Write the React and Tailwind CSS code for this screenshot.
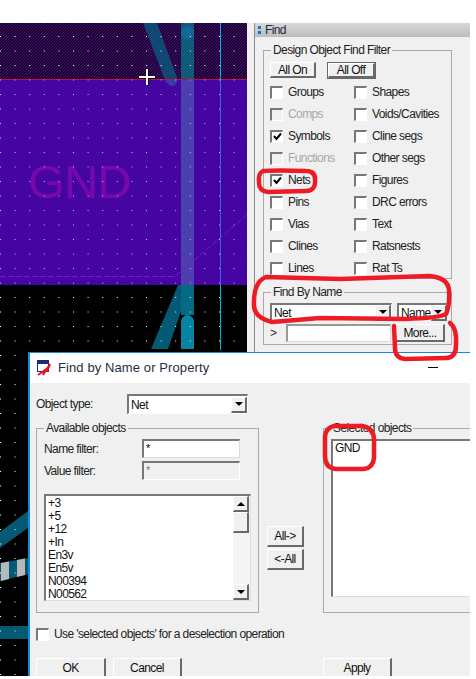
const FONT = "font-['Liberation_Sans',Arial,sans-serif]"

const LEFT_FILTERS = [
  { label: 'Groups' },
  { label: 'Comps', disabled: true },
  { label: 'Symbols', checked: true },
  { label: 'Functions', disabled: true },
  { label: 'Nets', checked: true },
  { label: 'Pins' },
  { label: 'Vias' },
  { label: 'Clines' },
  { label: 'Lines' },
]
const RIGHT_FILTERS = ['Shapes', 'Voids/Cavities', 'Cline segs', 'Other segs', 'Figures', 'DRC errors', 'Text', 'Ratsnests', 'Rat Ts']
const NETS = ['+3', '+5', '+12', '+In', 'En3v', 'En5v', 'N00394', 'N00562']

function Checkbox({ label, checked, disabled }) {
  return (
    <div className="flex items-center h-[22px] gap-[5px]">
      <div className={`w-[13px] h-[13px] shrink-0 border-t-2 border-l-2 border-r border-b border-t-[#777] border-l-[#777] border-r-white border-b-white flex items-center justify-center ${disabled ? 'bg-[#f0f0f0]' : 'bg-white'}`}>
        {checked && (
          <svg width="9" height="9" viewBox="0 0 9 9">
            <path d="M1 4 L3.5 7 L8 1.5" fill="none" stroke="#000" strokeWidth="2" />
          </svg>
        )}
      </div>
      <span className={`whitespace-nowrap ${disabled ? 'text-[#a8a8a8]' : 'text-[#222]'}`}>{label}</span>
    </div>
  )
}

function Button({ children, className = '' }) {
  return (
    <div className={`flex items-center justify-center bg-[#f0f0f0] border-t border-l border-t-white border-l-white border-b-2 border-r-2 border-b-[#696969] border-r-[#696969] text-[#111] ${className}`}>
      {children}
    </div>
  )
}

function Arrow({ up }) {
  return (
    <div className="w-[16px] h-[16px] flex items-center justify-center bg-[#f0f0f0] border-t border-l border-t-white border-l-white border-b-2 border-r-2 border-b-[#696969] border-r-[#696969] shrink-0">
      <div className={`w-0 h-0 border-l-[4px] border-r-[4px] border-l-transparent border-r-transparent ${up ? 'border-b-[4px] border-b-black' : 'border-t-[4px] border-t-black'}`} />
    </div>
  )
}

function Select({ value, className = '' }) {
  return (
    <div className={`flex items-center bg-white border-t-2 border-l-2 border-t-[#777] border-l-[#777] border-r border-b border-r-white border-b-white ${className}`}>
      <span className="flex-1 pl-[2px] whitespace-nowrap text-[#111]">{value}</span>
      <Arrow />
    </div>
  )
}

function Group({ title, className = '', children }) {
  return (
    <div className={`relative border border-[#a9a9a9] ${className}`}>
      <span className="absolute -top-[8px] left-[7px] px-[2px] leading-[14px] bg-[#f0f0f0] text-[#222] whitespace-nowrap">{title}</span>
      {children}
    </div>
  )
}

function Canvas() {
  return (
    <svg width="247" height="653" viewBox="0 23 247 653" className="block">
      <defs>
        <pattern id="hatch" width="3" height="3" patternUnits="userSpaceOnUse">
          <rect width="3" height="3" fill="#000" />
          <path d="M0 3 L3 0 M-1 1 L1 -1 M2 4 L4 2" stroke="#4f0a86" strokeWidth="1.1" />
        </pattern>
        <pattern id="hatchOver" width="3" height="3" patternUnits="userSpaceOnUse">
          <path d="M0 3 L3 0 M-1 1 L1 -1 M2 4 L4 2" stroke="#3a0a70" strokeWidth="1.1" opacity="0.45" />
        </pattern>
        <pattern id="fill" width="3" height="3" patternUnits="userSpaceOnUse">
          <rect width="3" height="3" fill="#3000b0" />
          <path d="M0 3 L3 0 M-1 1 L1 -1 M2 4 L4 2" stroke="#5a0896" strokeWidth="1.1" />
        </pattern>
        <pattern id="dots" width="14.6" height="14.5" patternUnits="userSpaceOnUse" patternTransform="translate(0 7)">
          <rect x="0" y="0" width="1" height="1" fill="#fff" />
        </pattern>
        <pattern id="dots2" width="14.6" height="14.5" patternUnits="userSpaceOnUse" patternTransform="translate(0 7)">
          <rect x="0" y="0" width="1" height="1" fill="#d8b8f0" />
        </pattern>
      </defs>
      <rect x="0" y="23" width="247" height="653" fill="#000" />
      <rect x="0" y="23" width="247" height="56" fill="url(#hatch)" />

      {/* traces above the shape */}
      <path d="M143 23 L157 23 L178 80 L165 80 Z" fill="#045a74" />
      <rect x="181" y="23" width="13" height="56" fill="#04707e" />
      <circle cx="187.5" cy="33" r="6.5" fill="#0684a4" />
      <rect x="143" y="23" width="52" height="56" fill="url(#hatchOver)" />
      <rect x="0" y="23" width="247" height="56" fill="url(#dots)" />

      <rect x="0" y="79" width="247" height="206" fill="url(#fill)" />
      <path d="M164 79 H178 L176 84 Q172 88 168 84 Z" fill="#3d3aa6" />
      <rect x="181" y="79" width="13" height="206" fill="#4d3fb0" />
      <rect x="0" y="79" width="247" height="1" fill="#c0103c" />
      <text x="28" y="198" fontSize="47" fill="#7808ac" fontFamily="'Liberation Sans', Arial, sans-serif">GND</text>
      <rect x="0" y="79" width="247" height="206" fill="url(#dots2)" />
      <path d="M0 276.5 H175 L247 215" fill="none" stroke="#8a0fd0" strokeWidth="1" strokeDasharray="6 2" />
      <rect x="220" y="80" width="1" height="205" fill="#3a60f0" />

      {/* below the shape */}
      <path d="M178 285 L190 285 L168 349 L151 349 Z" fill="#045a74" />
      <rect x="181" y="285" width="13" height="30" fill="#036c84" />
      <path d="M181 349 V321.5 A6.5 6.5 0 0 1 194 321.5 V349 Z" fill="#0684a4" />
      <rect x="220" y="23" width="1" height="57" fill="#00b4e6" />
      <rect x="220" y="285" width="1" height="65" fill="#00b4e6" />

      {/* crosshair */}
      <path d="M140 78 H156 M148 70 V86" stroke="#000" strokeWidth="2" />
      <path d="M139 77 H155 M147 69 V85" stroke="#fff" strokeWidth="2" />

      {/* traces beside the dialog */}
      <path d="M0 532 L28 511 V528 L0 548 Z" fill="#045a74" />
      <path d="M0 563 L28 558 V574 L0 581 Z" fill="#045a74" />
      <path d="M1 563 L9 561.5 V579 L1 581 Z M17 560 L25 558.5 V575 L17 577 Z" fill="#b8b8b8" />
      <rect x="0" y="626" width="28" height="13" fill="#045a74" />
      <rect x="0" y="285" width="247" height="391" fill="url(#dots)" />
    </svg>
  )
}

function FindPanel() {
  return (
    <div className="w-[223px] h-[329px] flex bg-[#f0f0f0] overflow-hidden">
      <div className="w-[8px] shrink-0 border-r border-r-[#8a8a8a]" />
      <div className="flex-1 flex flex-col">
        <div className="h-[14px] flex items-center gap-[4px] pl-[3px] bg-gradient-to-b from-[#d8d8d8] to-[#bdbdbd] text-[#1c2a40] shrink-0">
          <div className="flex flex-col gap-[2px]">
            <div className="w-[3px] h-[3px] bg-[#0a78e0]" />
            <div className="w-[3px] h-[3px] bg-[#0a78e0]" />
          </div>
          <span>Find</span>
        </div>
        <div className="pl-[8px] pt-[13px]">
          <Group title="Design Object Find Filter" className="w-[189px] h-[229px] pl-[6px] pt-[11px]">
            <div className="flex gap-[11px]">
              <Button className="w-[46px] h-[16px]">All On</Button>
              <div className="border border-[#696969]"><Button className="w-[47px] h-[15px]">All Off</Button></div>
            </div>
            <div className="flex mt-[2px]">
              <div className="w-[84px] flex flex-col">
                {LEFT_FILTERS.map(f => <Checkbox key={f.label} {...f} />)}
              </div>
              <div className="flex flex-col">
                {RIGHT_FILTERS.map(label => <Checkbox key={label} label={label} />)}
              </div>
            </div>
          </Group>
          <Group title="Find By Name" className="w-[189px] h-[53px] mt-[13px] pl-[6px] pt-[10px]">
            <div className="flex gap-[5px]">
              <Select value="Net" className="w-[122px] h-[18px]" />
              <Select value="Name" className="w-[50px] h-[18px]" />
            </div>
            <div className="flex items-center mt-[3px]">
              <span className="w-[16px] text-[#333]">&gt;</span>
              <div className="w-[105px] h-[18px] bg-white border-t-2 border-l-2 border-t-[#999] border-l-[#999] border-r border-b border-r-[#ddd] border-b-[#ddd]" />
              <Button className="w-[49px] h-[18px] ml-[5px]">More...</Button>
            </div>
          </Group>
        </div>
      </div>
    </div>
  )
}

function Dialog() {
  return (
    <div className="absolute left-[28px] top-[352px] w-[442px] h-[324px] flex flex-col overflow-hidden bg-[#f0f0f0] border-l-2 border-t border-[#1a86d8]">
      <div className="h-[30px] shrink-0 bg-white flex items-center pl-[7px] gap-[5px]">
        <svg width="16" height="16" viewBox="0 0 16 16">
          <rect x="0.5" y="0.5" width="11" height="11" fill="#fff" stroke="#1c2a78" />
          <rect x="1" y="1" width="10" height="3" fill="#1c2a78" />
          <path d="M1 15 L8 10 L6 15 L13 4 L10 12" fill="none" stroke="#e8102a" strokeWidth="2" />
        </svg>
        <span className="text-[13px] text-[#1e2e44] tracking-[0.1px]">Find by Name or Property</span>
        <div className="absolute right-[32px] top-[14px] w-[10px] h-px bg-black" />
      </div>
      <div className="flex-1 pl-[6px] pt-[11px]">
        <div className="flex items-center h-[20px]">
          <span className="w-[91px] text-[#222]">Object type:</span>
          <Select value="Net" className="w-[121px] h-[20px]" />
        </div>
        <div className="flex mt-[14px]">
          <Group title="Available objects" className="w-[223px] h-[185px] shrink-0 pt-[10px] pl-[7px]">
            <div className="flex items-center h-[19px]">
              <span className="w-[98px] text-[#222]">Name filter:</span>
              <div className="w-[98px] h-[19px] bg-white border-t-2 border-l-2 border-t-[#777] border-l-[#777] border-r border-b border-r-[#ddd] border-b-[#ddd] text-[11px] leading-[14px] pl-[2px]">*</div>
            </div>
            <div className="flex items-center h-[19px] mt-[3px]">
              <span className="w-[98px] text-[#222]">Value filter:</span>
              <div className="w-[98px] h-[19px] bg-[#f0f0f0] border-t-2 border-l-2 border-t-[#777] border-l-[#777] border-r border-b border-r-white border-b-white text-[11px] leading-[14px] pl-[2px] text-[#777]">*</div>
            </div>
            <div className="flex w-[207px] h-[107px] mt-[14px] bg-white border-t-2 border-l-2 border-t-[#777] border-l-[#777] border-r border-b border-r-[#ddd] border-b-[#ddd]">
              <div className="flex-1 pl-[2px] text-[#111] leading-[13px] pt-[1px]">
                {NETS.map(n => <div key={n}>{n}</div>)}
              </div>
              <div className="w-[17px] flex flex-col bg-[#f4f4f4]">
                <Arrow up />
                <div className="w-[16px] h-[21px] bg-[#f0f0f0] border-t border-l border-t-white border-l-white border-b-2 border-r-2 border-b-[#696969] border-r-[#696969]" />
                <div className="flex-1" />
                <Arrow />
              </div>
            </div>
          </Group>
          <div className="w-[64px] shrink-0 flex flex-col pt-[98px] pl-[8px]">
            <Button className="w-[37px] h-[21px] border-t-[#ddd]">All-&gt;</Button>
            <Button className="w-[37px] h-[21px] mt-[2px]">&lt;-All</Button>
          </div>
          <Group title="Selected objects" className="w-[160px] h-[185px] shrink-0 pt-[10px] pl-[7px]">
            <div className="h-[158px] bg-white border-t-2 border-l-2 border-t-[#777] border-l-[#777] border-b border-b-[#ddd] pl-[2px] pt-[1px] leading-[13px] text-[#111]">GND</div>
          </Group>
        </div>
        <div className="mt-[11px] h-[20px] flex items-center">
          <Checkbox label="Use 'selected objects' for a deselection operation" />
        </div>
        <div className="flex mt-[14px]">
          <Button className="w-[70px] h-[20px] border-[#777] border-t-[#777] border-l-[#777]">OK</Button>
          <Button className="w-[69px] h-[20px] ml-[7px]">Cancel</Button>
          <Button className="w-[69px] h-[20px] ml-[141px]">Apply</Button>
        </div>
      </div>
    </div>
  )
}

function Annotations() {
  return (
    <svg width="476" height="679" viewBox="0 0 476 679" className="absolute inset-0 pointer-events-none">
      <g fill="none" stroke="#ed1c24" strokeWidth="4.5" strokeLinejoin="round" strokeLinecap="round">
        <path d="M263 171 Q277 170 306 171 Q315 171 315 179 Q316 191 306 191 L268 192 Q259 191 259 183 Q258 173 263 171 Z" />
        <path d="M266 277 L340 279 L430 276 Q448 278 449 290 Q450 305 446 314 Q440 318 405 319 L320 318 Q285 321 272 322 Q255 318 254 306 Q253 282 266 277 Z" />
        <path d="M450 323 Q457 328 456 345 Q456 358 446 358 L405 359 Q395 358 395 348 L394 326" />
        <path d="M334 426 L362 426 Q374 428 374 440 L374 458 Q373 468 364 469 L336 469 Q325 468 325 456 L325 436 Q326 428 334 426 Z" />
      </g>
    </svg>
  )
}

export default function App() {
  return (
    <div className={`relative w-[476px] h-[679px] bg-white overflow-hidden text-[12px] leading-[14px] tracking-[-0.6px] ${FONT}`}>
      <div className="pt-[23px] flex items-start">
        <Canvas />
        <FindPanel />
      </div>
      <Dialog />
      <Annotations />
    </div>
  )
}
